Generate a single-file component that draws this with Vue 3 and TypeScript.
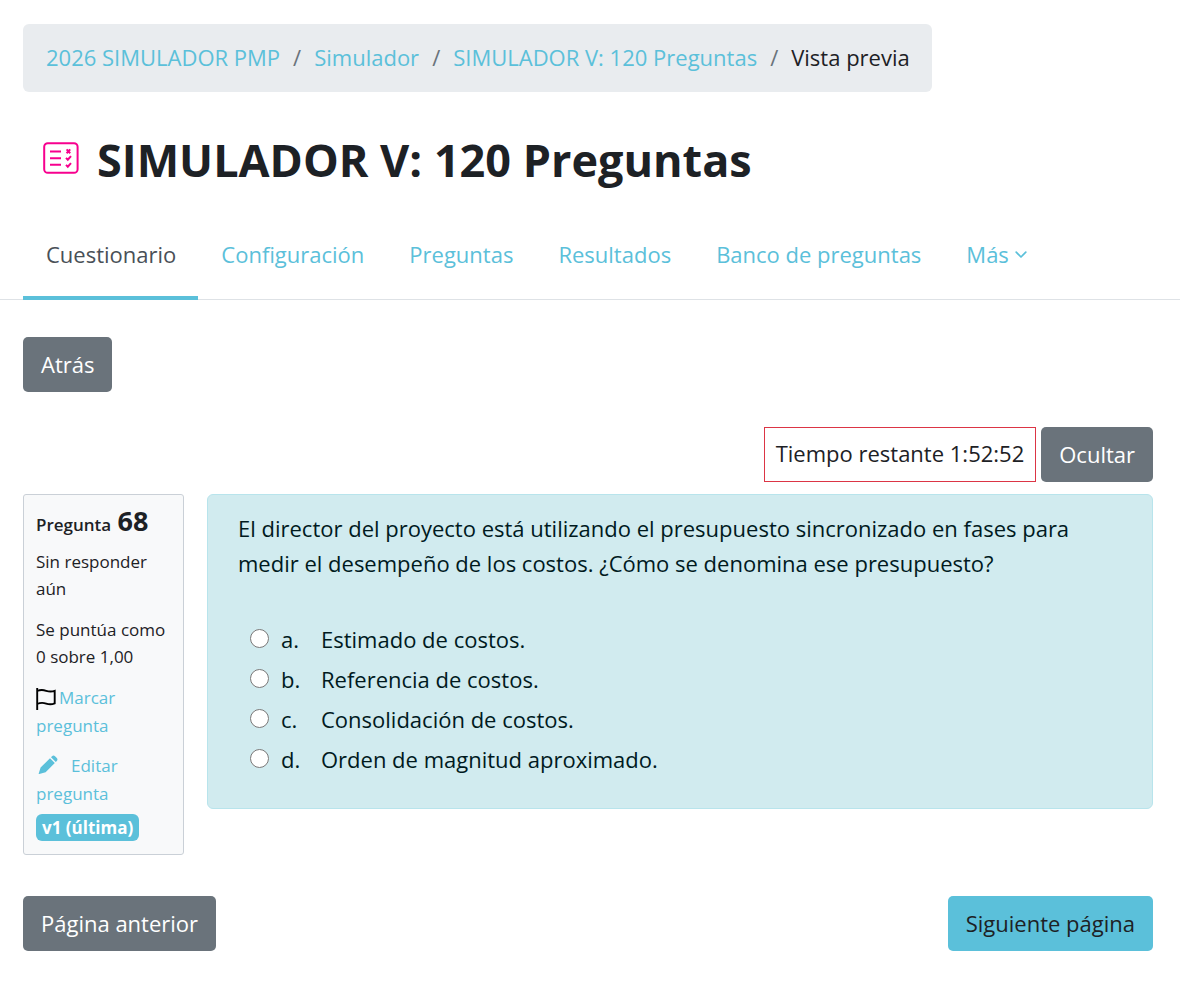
<script setup lang="ts">
import { ref } from 'vue'

interface Crumb { label: string; current?: boolean }
interface Answer { letter: string; text: string }

const crumbs: Crumb[] = [
  { label: '2026 SIMULADOR PMP' },
  { label: 'Simulador' },
  { label: 'SIMULADOR V: 120 Preguntas' },
  { label: 'Vista previa', current: true },
]
const tabs: string[] = ['Cuestionario', 'Configuración', 'Preguntas', 'Resultados', 'Banco de preguntas']
const answers: Answer[] = [
  { letter: 'a.', text: 'Estimado de costos.' },
  { letter: 'b.', text: 'Referencia de costos.' },
  { letter: 'c.', text: 'Consolidación de costos.' },
  { letter: 'd.', text: 'Orden de magnitud aproximado.' },
]
const activeTab = ref('Cuestionario')
const selected = ref('')
</script>

<template>
  <div class="page">
    <header class="wrap">
      <nav class="crumbs" aria-label="Ruta">
        <ol>
          <li v-for="c in crumbs" :key="c.label">
            <span v-if="c.current" aria-current="page">{{ c.label }}</span>
            <a v-else href="#">{{ c.label }}</a>
          </li>
        </ol>
      </nav>
      <div class="heading">
        <svg class="quiz" viewBox="0 0 36 34" fill="none" stroke="#f7008e" aria-hidden="true">
          <rect x="1.2" y="2.2" width="33.4" height="29.6" rx="3.6" stroke-width="2" />
          <path d="M7 10.4h11M7 17.2h11M7 23.8h11" stroke-width="2" />
          <path d="M23.6 8.4l3.6 3.8M27.2 8.4l-3.6 3.8M23 16.9l1.8 1.8 3.2-3.5M23 23.9l1.8 1.8 3.2-3.5" stroke-width="2" />
        </svg>
        <h1>SIMULADOR V: 120 Preguntas</h1>
      </div>
    </header>

    <nav class="tabs" aria-label="Cuestionario">
      <a v-for="t in tabs" :key="t" href="#" :class="{ active: t === activeTab }" @click.prevent="activeTab = t">{{ t }}</a>
      <a href="#" class="more">Más
        <svg viewBox="0 0 12 8" fill="none" stroke="currentColor" stroke-width="1.7" stroke-linecap="round" stroke-linejoin="round" aria-hidden="true"><path d="M1.2 1.2L6 6l4.800-4.800" /></svg>
      </a>
    </nav>

    <main class="wrap">
      <button type="button" class="btn">Atrás</button>

      <div class="timer-row">
        <div class="timer" role="timer">Tiempo restante 1:52:52</div>
        <button type="button" class="btn">Ocultar</button>
      </div>

      <div class="question">
        <aside class="info">
          <h2>Pregunta <b>68</b></h2>
          <p>Sin responder aún</p>
          <p>Se puntúa como 0 sobre 1,00</p>
          <p class="action">
            <a href="#"><svg class="flag" viewBox="0 0 20 22" fill="none" stroke="#000" stroke-width="1.9" aria-hidden="true"><path d="M1.200 0v22M1.200 3c3-1.300 6-1.200 9-.2s6 .9 8.500 0v12.600c-2.800 1.200-5.600 1.200-8.500.2s-6-1-9 .4" /></svg>Marcar pregunta</a>
          </p>
          <p class="action edit">
            <a href="#"><svg class="pencil" viewBox="0 0 20 20" fill="currentColor" aria-hidden="true"><path d="M12 3.200l4.800 4.800L7.600 17.200l-6.300 1.900c-.4.100-.7-.2-.6-.6L2.600 12.600zM13 2.200l1-1c.9-.9 2.100-.9 3 0l1.800 1.800c.9.900.9 2.100 0 3l-1 1z" /></svg>Editar pregunta</a>
          </p>
          <span class="badge">v1 (última)</span>
        </aside>

        <section class="content">
          <p id="qtext">El director del proyecto está utilizando el presupuesto sincronizado en fases para medir el desempeño de los costos. ¿Cómo se denomina ese presupuesto?</p>
          <div class="answers" role="radiogroup" aria-labelledby="qtext">
            <label v-for="a in answers" :key="a.letter">
              <input v-model="selected" type="radio" name="answer" :value="a.letter" />
              <span class="letter">{{ a.letter }}</span>
              <span>{{ a.text }}</span>
            </label>
          </div>
        </section>
      </div>

      <div class="pager">
        <button type="button" class="btn">Página anterior</button>
        <button type="button" class="btn primary">Siguiente página</button>
      </div>
    </main>
  </div>
</template>

<style>
body {
  margin: 0;
  background: #fff;
}
</style>

<style scoped>
.page {
  padding: 24px 0 30px;
  font: 22px/35px "Segoe UI", "Open Sans", "Noto Sans", sans-serif;
  color: #1d2125;
}
.wrap {
  padding: 0 27px 0 23px;
}
a {
  color: #5bc0da;
  text-decoration: none;
}
.crumbs {
  display: inline-block;
  background: #e9ecef;
  border-radius: 6px;
  padding: 16px 22px 17px 23px;
}
.crumbs ol {
  display: flex;
  margin: 0;
  padding: 0;
  list-style: none;
}
.crumbs li + li::before {
  content: "/";
  color: #6a737b;
  padding: 0 13px;
}
.heading {
  display: flex;
  align-items: center;
  gap: 18px;
  padding: 38px 20px 0;
}
.quiz {
  width: 36px;
  height: 34px;
  margin-bottom: 4px;
}
h1 {
  margin: 0;
  font-size: 45px;
  line-height: 60px;
  font-weight: 700;
}
.tabs {
  display: flex;
  margin-top: 20px;
  padding-left: 23px;
  border-bottom: 1px solid #dee2e6;
}
.tabs a {
  padding: 27px 22px 24px 23px;
  border-bottom: 4px solid transparent;
  margin-bottom: -1px;
}
.tabs a.active {
  color: #495057;
  border-bottom-color: #5bc0da;
}
.more svg {
  width: 12px;
  height: 8px;
  vertical-align: 4px;
}
.btn {
  font: inherit;
  color: #fff;
  background: #6a737b;
  border: 0;
  border-radius: 5px;
  padding: 10px 18px;
  display: block;
}
.btn.primary {
  background: #5bc0da;
  color: #1d2125;
}
main.wrap {
  padding-top: 37px;
}
.timer-row {
  display: flex;
  justify-content: flex-end;
  gap: 5px;
  margin: 35px 0 12px;
}
.timer {
  border: 1px solid #dc3545;
  padding: 8px 11px 10px;
}
.question {
  display: grid;
  grid-template-columns: 161px 1fr;
  gap: 23px;
  align-items: start;
}
.info {
  box-sizing: border-box;
  font-size: 17px;
  line-height: 27px;
  background: #f8f9fa;
  border: 1px solid #cad0d7;
  border-radius: 3px;
  padding: 12px 12px 13px;
}
.info h2 {
  margin: 0 0 9px;
  font-size: 17px;
  line-height: 28px;
  font-weight: 600;
}
.info h2 b {
  font-size: 27px;
  font-weight: 700;
  margin-left: 2px;
}
.info p {
  margin: 0 0 14px;
}
.info .action {
  line-height: 28px;
  margin-bottom: 12px;
}
.info .edit {
  margin-bottom: 6px;
}
.flag {
  width: 20px;
  height: 22px;
  vertical-align: -6px;
  margin-right: 3px;
}
.pencil {
  width: 20px;
  height: 20px;
  vertical-align: -3px;
  margin: 0 13px 0 2px;
}
.badge {
  display: block;
  width: max-content;
  background: #5bc0da;
  color: #fff;
  font-size: 17px;
  line-height: 27px;
  font-weight: 700;
  border-radius: 6px;
  padding: 0 6px;
}
.content {
  background: #d1ebef;
  border: 1px solid #b8e4ec;
  border-radius: 6px;
  padding: 16px 30px 31px;
  color: #001a1e;
}
.content p {
  margin: 0 0 41px;
}
.answers {
  display: grid;
  gap: 5px;
}
.answers label {
  display: flex;
  align-items: flex-start;
}
.answers input {
  width: 19px;
  height: 19px;
  margin: 7px 12px 0;
}
.letter {
  width: 40px;
}
.pager {
  display: flex;
  justify-content: space-between;
  margin-top: 41px;
}
</style>
